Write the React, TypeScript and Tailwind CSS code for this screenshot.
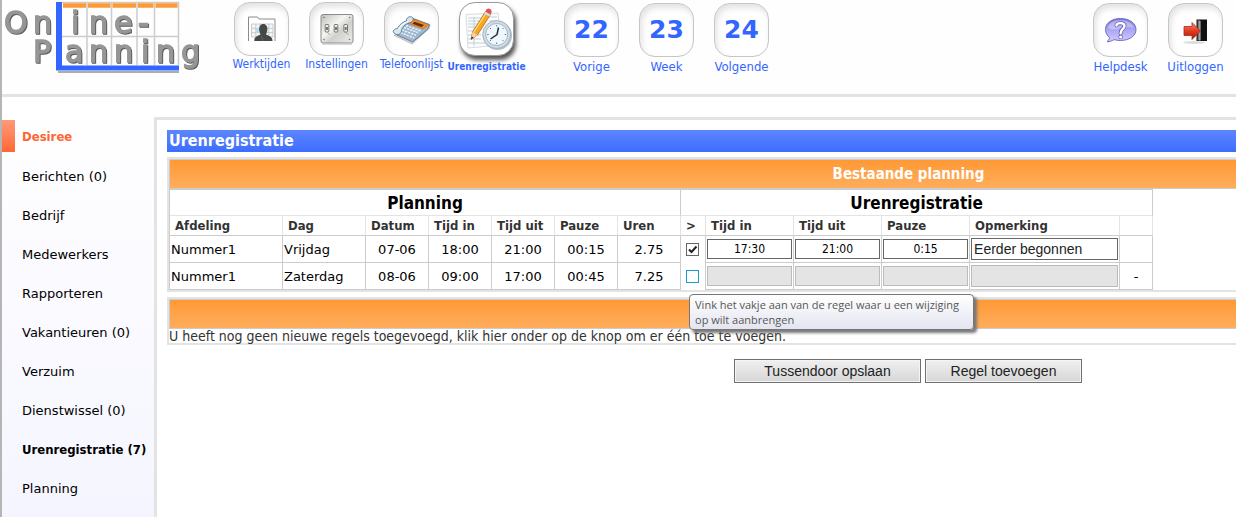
import React from "react";
import clsx from "clsx";

const menuItems = [
  { name: "Berichten (0)" },
  { name: "Bedrijf" },
  { name: "Medewerkers" },
  { name: "Rapporteren" },
  { name: "Vakantieuren (0)" },
  { name: "Verzuim" },
  { name: "Dienstwissel (0)" },
  { name: "Urenregistratie (7)", active: true },
  { name: "Planning" },
];

const rows = [
  {
    afdeling: "Nummer1",
    dag: "Vrijdag",
    planning: ["07-06", "18:00", "21:00", "00:15", "2.75"],
    checked: true,
    uren: ["17:30", "21:00", "0:15"],
    opmerking: "Eerder begonnen",
    actie: "",
  },
  {
    afdeling: "Nummer1",
    dag: "Zaterdag",
    planning: ["08-06", "09:00", "17:00", "00:45", "7.25"],
    checked: false,
    uren: ["", "", ""],
    opmerking: "",
    actie: "-",
  },
];

const columns = ["Afdeling", "Dag", "Datum", "Tijd in", "Tijd uit", "Pauze", "Uren", ">", "Tijd in", "Tijd uit", "Pauze", "Opmerking", ""];
const urenLabels = ["Tijd in", "Tijd uit", "Pauze"];

// The blue corner doubles as the "l" of both words
const Logo = () => (
  <svg width="222" height="84" viewBox="2 0 222 84" role="img" aria-label="Online-Planning">
    <path d="M58 72H179" stroke="#777" strokeWidth="2" opacity=".6" />
    <path d="M62 2.500H178.500V65M62 36.500H178M87 3V65M111.500 3V65M137 3V65M154.500 3V65" fill="none" stroke="#ccc" strokeWidth="1.500" />
    <path d="M63 5.500H86M88 5.500H110.500M112.500 5.500H136M138 5.500H153.500M155.500 5.500H177.500" stroke="#ff9933" strokeWidth="4.500" />
    <path d="M56 2H62V65.500H179V70.500H56Z" fill="#3366ff" />
    <g
      className="[filter:drop-shadow(1px_1px_0_#5c5c5c)]"
      fill="#969696"
      stroke="#969696"
      strokeWidth="1.400"
      fontSize="30"
      fontFamily="'DejaVu Sans', sans-serif"
    >
      <text y="33" x="4 33">On</text>
      <text y="33" x="71 89 114 138">ine-</text>
      <text y="62" x="33">P</text>
      <text y="62" x="65 89 114 141 156 181">anning</text>
    </g>
  </svg>
);

const WerktijdenIcon = () => (
  <svg width="53" height="51" viewBox="1 1 53 51">
    <path d="M14.500 38V14H23.500L25 16H41V38" fill="#fff" stroke="#8b8b8b" />
    <path d="M17.500 21H39V34H17.500ZM17.500 25.300H39M17.500 29.600H39M21.800 21V34M26 21V34M30.500 21V34M34.800 21V34" fill="#f5f6f8" stroke="#c3c7cc" strokeWidth=".9" />
    <path d="M22 25.500H26V29.500H22Z" fill="#b5dcf7" />
    <path d="M20.300 38C20.300 34.500 21.500 33.500 26.500 31.800C26.500 30.500 25.200 29 25.200 26.500C25 23.500 26.500 21 29.300 21C32 21 33.700 23.500 33.400 26.500C33.200 29 32.200 30.500 32.200 31.800C37 33.500 38.500 34.500 38.500 38Z" fill="#454846" />
    <path d="M27.500 33L29 38" stroke="#707371" strokeWidth=".7" />
  </svg>
);

const InstellingenIcon = () => (
  <svg width="53" height="51" viewBox="1 1 53 51">
    <defs>
      <linearGradient id="plate" x2="1" y2="1">
        <stop stopColor="#bdbdb8" />
        <stop offset=".4" stopColor="#f5f5f2" />
        <stop offset=".6" stopColor="#d0d0cc" />
        <stop offset="1" stopColor="#ededea" />
      </linearGradient>
    </defs>
    <rect x="12" y="11.500" width="32" height="28.500" rx="2" fill="url(#plate)" stroke="#8a8a86" />
    <path d="M13 41.200H43" stroke="#c9c9c9" />
    {[18, 27, 36.700].map((x) => (
      <g key={x}>
        <rect x={x - 1.800} y="21.500" width="3.600" height="7.500" rx=".8" fill="#f1f1ee" stroke="#686864" strokeWidth=".9" />
        <path d={`M${x - 1} 24H${x + 1}V27H${x - 1}Z`} fill="#777" />
      </g>
    ))}
    <path d="M18 29L21 32M36.700 29L39.500 32" stroke="#999" strokeWidth=".8" />
    {[15, 40.500].map((x) => [14.500, 36.500].map((y) => <circle key={x + y} cx={x} cy={y} r=".8" fill="#777" />))}
  </svg>
);

const TelefoonIcon = () => (
  <svg width="53" height="51" viewBox="1 1 53 51">
    <path d="M10 32L28 40.500L45 25L46 22" fill="none" stroke="#c2c6ca" strokeWidth="1.500" />
    <path d="M13 28L28 15L45.500 21.500L43.500 26.500L28.500 39L13 32Z" fill="#9fb8cf" stroke="#4c687f" strokeWidth=".8" />
    <path d="M28 16L44.500 21.500L39.500 26L23 20Z" fill="#f58a1e" stroke="#c06010" strokeWidth=".5" />
    <path d="M30.500 18.700L40 22L37.500 24L28.500 20.800Z" fill="#5b2d12" />
    <path d="M20 24.500L34 29.500M18 27L32 32.200M16.500 29.500L30 35M22 22.500L36.500 27.700" stroke="#eaf3fb" strokeWidth="1.500" strokeDasharray="2.300 1" />
    <path d="M10 30C8 28 10.500 25.500 13.500 25.500C15 22 19 18.500 22.500 18C22 14.500 26 12.500 28.500 14.500C30.500 16.500 28 19.500 25 20C21 21 18 24.500 17.500 28C17 31.500 12.500 33 10 30Z" fill="#d5e6f3" stroke="#55758f" strokeWidth=".9" />
    <path d="M14 27C16 23 19.500 20 24 18.500" fill="none" stroke="#fff" />
  </svg>
);

const UrenIcon = () => (
  <svg width="53" height="51" viewBox="1 1 53 51">
    <path d="M7 11.500L39 10L43 42L9 45Z" fill="#fbfcfd" stroke="#c9d3da" strokeWidth=".8" />
    <path d="M9 15H24M9 18H22M9 21H26M9 24H20M9 28H20M9 32H22M9 36H22M9 40H26M15 14V43M30 14H38M30 18H38" stroke="#bccbd5" strokeWidth=".9" />
    <circle cx="38.500" cy="32.500" r="14.500" fill="#b4c0ca" />
    <circle cx="37.700" cy="31.500" r="14" fill="#cfdae3" stroke="#9aabb9" strokeWidth=".8" />
    <circle cx="37.700" cy="31.500" r="11" fill="#eef7fd" stroke="#91a9bc" strokeWidth=".8" />
    <path d="M37.700 22V23.500M37.700 39.500V41M28.200 31.500H29.700M45.700 31.500H47.200M31 25L32 26M44.500 25L43.500 26M31 38L32 37M44.500 38L43.500 37" stroke="#60778a" />
    <path d="M39.500 24.500L38 31.500L31.500 36" fill="none" stroke="#26323b" strokeWidth="1.500" />
    <path d="M12 36.500L13.500 29L26.500 8.500L31.500 11.500L18.500 32Z" fill="#f6a623" stroke="#a8600f" strokeWidth=".7" />
    <path d="M14.500 29.500L27.500 9.500" stroke="#ffde7a" strokeWidth="1.300" />
    <path d="M12 36.500L13.500 29L18.500 32Z" fill="#f4d3a1" />
    <path d="M12 36.500L12.600 33.500L14.600 34.800Z" fill="#222" />
    <path d="M25.200 10.500L30.200 13.500L31.500 11.500L26.500 8.500Z" fill="#d9dde0" />
    <path d="M26.500 8.500C27 5.500 29.500 4.800 31.200 6C33 7.200 33.300 9.500 31.500 11.500Z" fill="#e0525b" />
  </svg>
);

const HelpdeskIcon = () => (
  <svg width="53" height="51" viewBox="1 1 53 51">
    <defs>
      <linearGradient id="bubble" x2="0" y2="1">
        <stop stopColor="#7775dd" />
        <stop offset=".45" stopColor="#a9a4f2" />
        <stop offset="1" stopColor="#d3c9ff" />
      </linearGradient>
    </defs>
    <path d="M27.500 14.500C36 14.500 43 19 43 25.500C43 32 36 36.500 27.500 36.500C25 36.500 23 36.200 21 35.600C19 37 17 37.700 14 37.700C15.500 36.500 16.300 35 16.500 33.500C14 31.500 12.500 28.700 12.500 25.500C12.500 19 19 14.500 27.500 14.500Z" fill="url(#bubble)" stroke="#6661b8" strokeWidth=".9" />
    <path d="M15 24C15.500 19 21 16 27.500 16C34 16 40 19 40.500 24C33 20.500 24 28 15 24Z" fill="#fff" opacity=".35" />
    <path d="M23.500 21.500C23.500 18.500 31.500 18 31.500 22C31.500 25 27.600 24.800 27.600 29.200" fill="none" stroke="#6862b5" strokeWidth="4" strokeLinecap="round" />
    <circle cx="27.600" cy="33" r="2.200" fill="#6862b5" />
    <path d="M23.500 21.500C23.500 18.500 31.500 18 31.500 22C31.500 25 27.600 24.800 27.600 29.200" fill="none" stroke="#fff" strokeWidth="2.400" strokeLinecap="round" />
    <circle cx="27.600" cy="33" r="1.500" fill="#fff" />
  </svg>
);

const UitloggenIcon = () => (
  <svg width="53" height="51" viewBox="1 1 53 51">
    <defs>
      <linearGradient id="arrow" x2="0" y2="1">
        <stop stopColor="#ff8a70" />
        <stop offset=".5" stopColor="#e23b20" />
        <stop offset="1" stopColor="#a91a0c" />
      </linearGradient>
      <linearGradient id="door">
        <stop stopColor="#55554f" />
        <stop offset="1" stopColor="#c8c8bc" />
      </linearGradient>
    </defs>
    <ellipse cx="26" cy="38.500" rx="11" ry="1.500" fill="#ddd" />
    <path d="M28.500 15.500H39V37H28.500Z" fill="#111" />
    <path d="M29.500 16L32.500 17V36.500H29.500Z" fill="url(#door)" />
    <path d="M16 22.500H24V18.500L32.500 27L24 35.500V31.500H16Z" fill="url(#arrow)" stroke="#a52b1b" strokeWidth=".8" />
  </svg>
);

interface HeaderItemProps {
  label: string;
  active?: boolean;
  low?: boolean;
  children: React.ReactNode;
}

const HeaderItem: React.FC<HeaderItemProps> = ({ label, active, low, children }) => (
  <a href="#" className="flex w-[75px] flex-col items-center whitespace-nowrap text-[#3366ff]">
    <span
      className={clsx(
        "flex h-[54px] w-[55px] items-center justify-center rounded-2xl border bg-white font-['DejaVu_Sans',sans-serif] text-[25px] font-bold",
        active
          ? "border-[#999] shadow-[2px_4px_4px_#555]"
          : "border-[#c6c6c6] shadow-[inset_2px_4px_6px_#e2e2e2]"
      )}
    >
      {children}
    </span>
    <span
      className={clsx(
        "leading-4",
        active && "mt-[3px] text-[10px] font-bold",
        low && "mt-0.5 text-[13px]",
        !active && !low && "text-[12px]"
      )}
    >
      {label}
    </span>
  </a>
);

const Header = () => (
  <header className="flex h-[97px] shrink-0 items-start justify-between border-b-[3px] border-[#e3e3e3] bg-[#fefefe] font-['DejaVu_Sans_Condensed','DejaVu_Sans',sans-serif]">
    <div className="flex">
      <Logo />
      <nav className="flex pt-0.5">
        <HeaderItem label="Werktijden"><WerktijdenIcon /></HeaderItem>
        <HeaderItem label="Instellingen"><InstellingenIcon /></HeaderItem>
        <HeaderItem label="Telefoonlijst"><TelefoonIcon /></HeaderItem>
        <HeaderItem label="Urenregistratie" active><UrenIcon /></HeaderItem>
      </nav>
      <nav className="ml-[30px] flex pt-[3px]">
        <HeaderItem label="Vorige" low>22</HeaderItem>
        <HeaderItem label="Week" low>23</HeaderItem>
        <HeaderItem label="Volgende" low>24</HeaderItem>
      </nav>
    </div>
    <nav className="flex pt-[3px] pr-[3px]">
      <HeaderItem label="Helpdesk" low><HelpdeskIcon /></HeaderItem>
      <HeaderItem label="Uitloggen" low><UitloggenIcon /></HeaderItem>
    </nav>
  </header>
);

const Sidebar = () => (
  <aside className="w-[152px] shrink-0 bg-linear-to-b from-white to-[#f5f5ff] pt-[23px] text-[13px] text-black">
    <div className="flex h-8 items-center">
      <span className="h-8 w-[13px] bg-linear-to-b from-[#ff9977] to-[#ff6633]" />
      <a href="#" className="pt-0.5 pl-[7px] font-['DejaVu_Sans_Condensed','DejaVu_Sans',sans-serif] font-bold text-[#ff6633]">
        Desiree
      </a>
    </div>
    <ul className="mt-[5px]">
      {menuItems.map((item) => (
        <li key={item.name} className="flex h-[39px] items-center pl-5 whitespace-nowrap">
          <a
            href="#"
            className={clsx(item.active && "font-['DejaVu_Sans_Condensed','DejaVu_Sans',sans-serif] font-bold")}
          >
            {item.name}
          </a>
        </li>
      ))}
    </ul>
  </aside>
);

const Band: React.FC<{ title?: string }> = ({ title }) => (
  <h2 className="flex h-[30px] items-center justify-center border-y border-l border-[#ccc] bg-linear-to-b from-[#ff9933] to-[#ffad5c] font-['DejaVu_Sans_Condensed','DejaVu_Sans',sans-serif] text-[15px] font-bold text-white">
    {title}
  </h2>
);

const Tooltip = () => (
  <div
    role="tooltip"
    className="absolute top-6 left-[3px] z-10 w-[285px] rounded-sm border border-[#767676] bg-linear-to-b from-white to-[#e4e5f0] px-[5px] py-0.5 text-left font-['Open_Sans','Noto_Sans',sans-serif] text-[11px] leading-[15px] text-[#575757] shadow-[3px_3px_3px_#777]"
  >
    Vink het vakje aan van de regel waar u een wijziging op wilt aanbrengen
  </div>
);

const PlanningTable = () => (
  <table className="w-[984px] table-fixed border-separate border-spacing-0 border-t border-l border-[#ccc] text-[13px] text-black">
    <colgroup>
      <col className="w-[113px]" />
      <col className="w-[83px]" />
      <col className="w-[63px]" />
      <col className="w-[63px]" />
      <col className="w-[63px]" />
      <col className="w-[63px]" />
      <col className="w-[63px]" />
      <col className="w-[25px]" />
      <col className="w-[88px]" />
      <col className="w-[88px]" />
      <col className="w-[88px]" />
      <col className="w-[150px]" />
      <col className="w-[33px]" />
    </colgroup>
    <thead className="font-['DejaVu_Sans_Condensed','DejaVu_Sans',sans-serif]">
      <tr className="h-[26px] text-[17px] leading-5">
        <th colSpan={7} className="border-r border-b border-r-[#ccc] border-b-[#e3e3e3] p-0">Planning</th>
        <th colSpan={6} className="border-r border-b border-r-[#ccc] border-b-[#e3e3e3] p-0">Urenregistratie</th>
      </tr>
      <tr className="h-5 text-left text-[13px] leading-4 text-[#333]">
        {columns.map((name, i) => (
          <th key={i} className="border-r border-b border-r-[#e3e3e3] border-b-[#ccc] p-0 pl-[5px]">{name}</th>
        ))}
      </tr>
    </thead>
    <tbody>
      {rows.map((row, index) => (
        <tr key={index} className="h-[27px] leading-4">
          <td className="border-r border-b border-[#ccc] p-0 pt-0.5 pl-px">{row.afdeling}</td>
          <td className="border-r border-b border-[#ccc] p-0 pt-0.5 pl-px">{row.dag}</td>
          {row.planning.map((value, i) => (
            <td key={i} className="border-r border-b border-[#ccc] p-0 pt-0.5 text-center">{value}</td>
          ))}
          <td className="border-r border-[#ccc] p-0 pb-px pl-[5px]">
            <div className="relative flex">
              <input
                type="checkbox"
                aria-label="Regel wijzigen"
                defaultChecked={row.checked}
                className={clsx(
                  "peer size-[13px] appearance-none border bg-white",
                  row.checked ? "border-[#666]" : "border-[#1b98d8]"
                )}
              />
              <svg viewBox="0 0 13 13" className="pointer-events-none absolute hidden size-[13px] peer-checked:block">
                <path d="M3 6.500L5.500 9L10.500 3.500" fill="none" stroke="#222" strokeWidth="2" />
              </svg>
              {index === 1 && <Tooltip />}
            </div>
          </td>
          {row.uren.map((value, i) => (
            <td key={i} className="border-r border-b border-[#ccc] px-px py-0">
              <input
                type="text"
                aria-label={urenLabels[i]}
                defaultValue={value}
                disabled={!row.checked}
                className="block h-5 w-full border border-[#666] bg-white text-center font-['DejaVu_Sans_Condensed','DejaVu_Sans',sans-serif] text-[12px] disabled:border-[#bbb] disabled:bg-[#e4e4e4]"
              />
            </td>
          ))}
          <td className="border-r border-b border-[#ccc] px-px py-0">
            <input
              type="text"
              aria-label="Opmerking"
              defaultValue={row.opmerking}
              disabled={!row.checked}
              className="block h-[22px] w-full border border-[#666] bg-white px-0.5 font-['Liberation_Sans',sans-serif] text-[14px] text-[#222] disabled:border-[#bbb] disabled:bg-[#e4e4e4]"
            />
          </td>
          <td className="border-r border-b border-[#ccc] p-0 pt-0.5 text-center">{row.actie}</td>
        </tr>
      ))}
    </tbody>
  </table>
);

const buttonClass =
  "h-6 border border-[#707070] bg-linear-to-b from-[#f0f0f0] to-[#d6d6d6] font-['Liberation_Sans',sans-serif] text-[14px] text-[#222] shadow-[inset_0_0_0_1px_#f4f4f4]";

const App = () => {
  return (
    <div className="flex min-h-screen flex-col overflow-hidden border-l-2 border-[#b5b5b5] bg-white font-['DejaVu_Sans',sans-serif]">
      <Header />
      <div className="flex flex-1">
        <Sidebar />
        <main className="mt-5 min-w-0 flex-1 overflow-hidden border-t-[3px] border-l-[3px] border-[#e3e3e3] p-2.5 pr-0">
          <div className="flex min-w-[1482px] flex-col gap-[5px]">
            <h1 className="h-[22px] bg-linear-to-b from-[#5c85ff] to-[#3d6dff] pl-0.5 font-['DejaVu_Sans_Condensed','DejaVu_Sans',sans-serif] text-[16px] leading-[22px] font-bold text-white">
              Urenregistratie
            </h1>
            <section className="border-2 border-[#e3e3e3]">
              <Band title="Bestaande planning" />
              <PlanningTable />
            </section>
            <section className="border-2 border-[#e3e3e3]">
              <Band />
              <p className="pt-px font-['DejaVu_Sans_Condensed','DejaVu_Sans',sans-serif] text-[14px] leading-[13px] text-[#333]">
                U heeft nog geen nieuwe regels toegevoegd, klik hier onder op de knop om er één toe te voegen.
              </p>
            </section>
            <div className="mt-[9px] flex justify-center gap-1">
              <button type="button" className={clsx(buttonClass, "w-[187px]")}>Tussendoor opslaan</button>
              <button type="button" className={clsx(buttonClass, "w-[157px]")}>Regel toevoegen</button>
            </div>
          </div>
        </main>
      </div>
    </div>
  );
};

export default App;
